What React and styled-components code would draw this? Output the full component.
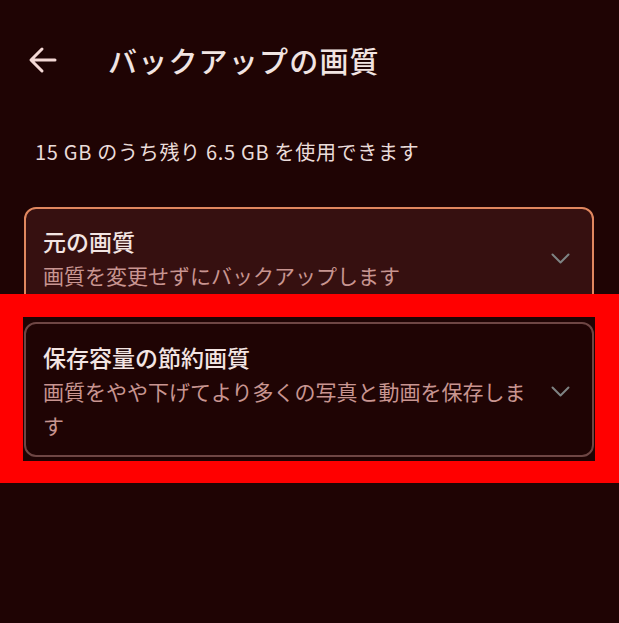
import React from 'react';
import styled, { createGlobalStyle } from 'styled-components';

const GlobalStyle = createGlobalStyle`
  html, body {
    margin: 0;
    padding: 0;
    background: #1f0404;
  }
  body {
    font-family: "Noto Sans CJK JP", "Noto Sans", sans-serif;
  }
`;

const Page = styled.div`
  position: relative;
  width: 619px;
  height: 623px;
  box-sizing: border-box;
  background: #1f0404;
  padding: 0 25px 0 24px;
  overflow: hidden;
`;

const Header = styled.header`
  display: flex;
  align-items: center;
  height: 120px;
  margin-left: -24px;
  padding-left: 28px;
`;

const BackButton = styled.button`
  display: flex;
  align-items: center;
  justify-content: center;
  width: 30px;
  height: 30px;
  padding: 0;
  border: none;
  background: none;
  margin-right: 50px;
`;

const Title = styled.h1`
  margin: 0;
  font-size: 29px;
  font-weight: 500;
  color: #f1e4e2;
  letter-spacing: 1.2px;
`;

const Storage = styled.p`
  margin: 17px 0 40px 11px;
  font-size: 20px;
  line-height: 30px;
  letter-spacing: 0.7px;
  color: #eadcda;
`;

const Options = styled.div`
  display: flex;
  flex-direction: column;
  gap: 15px;
`;

const Card = styled.div`
  display: flex;
  align-items: center;
  border-radius: 12px;
  border: 2px solid ${p => (p.$selected ? '#e0875f' : '#6e4644')};
  background: ${p => (p.$selected ? '#361010' : '#1f0404')};
  padding: ${p => (p.$selected ? '15px' : '16px')} 22px 13px 17px;
`;

const CardBody = styled.div`
  flex: 1;
  min-width: 0;
`;

const CardTitle = styled.div`
  font-size: 23px;
  line-height: 34px;
  font-weight: 500;
  color: #f3e5e3;
`;

const CardDesc = styled.div`
  font-size: 21px;
  line-height: 34px;
  color: #c89591;
`;

const Chevron = styled.svg`
  flex: none;
  margin-left: 12px;
`;

const Highlight = styled.div`
  position: absolute;
  left: 0;
  right: 0;
  top: 294px;
  height: 189px;
  box-sizing: border-box;
  border: solid #ff0000;
  border-width: 23px 24px 22px 23px;
  pointer-events: none;
`;

const options = [
  { title: '元の画質', desc: '画質を変更せずにバックアップします', selected: true },
  { title: '保存容量の節約画質', desc: '画質をやや下げてより多くの写真と動画を保存します', selected: false },
];

export default function App() {
  return (
    <>
      <GlobalStyle />
      <Page>
        <Header>
          <BackButton aria-label="戻る">
            <svg width="30" height="30" viewBox="0 0 30 30">
              <path d="M27 15H4M14 4 3 15l11 11" fill="none" stroke="#f3d8d5" strokeWidth="3" strokeLinecap="round" strokeLinejoin="round" />
            </svg>
          </BackButton>
          <Title>バックアップの画質</Title>
        </Header>
        <Storage>15 GB のうち残り 6.5 GB を使用できます</Storage>
        <Options>
          {options.map(o => (
            <Card key={o.title} $selected={o.selected}>
              <CardBody>
                <CardTitle>{o.title}</CardTitle>
                <CardDesc>{o.desc}</CardDesc>
              </CardBody>
              <Chevron width="19" height="11" viewBox="0 0 19 11">
                <path d="M1.5 1.5l8 8 8-8" fill="none" stroke="#7e8383" strokeWidth="2" strokeLinecap="round" strokeLinejoin="round" />
              </Chevron>
            </Card>
          ))}
        </Options>
        <Highlight />
      </Page>
    </>
  );
}
